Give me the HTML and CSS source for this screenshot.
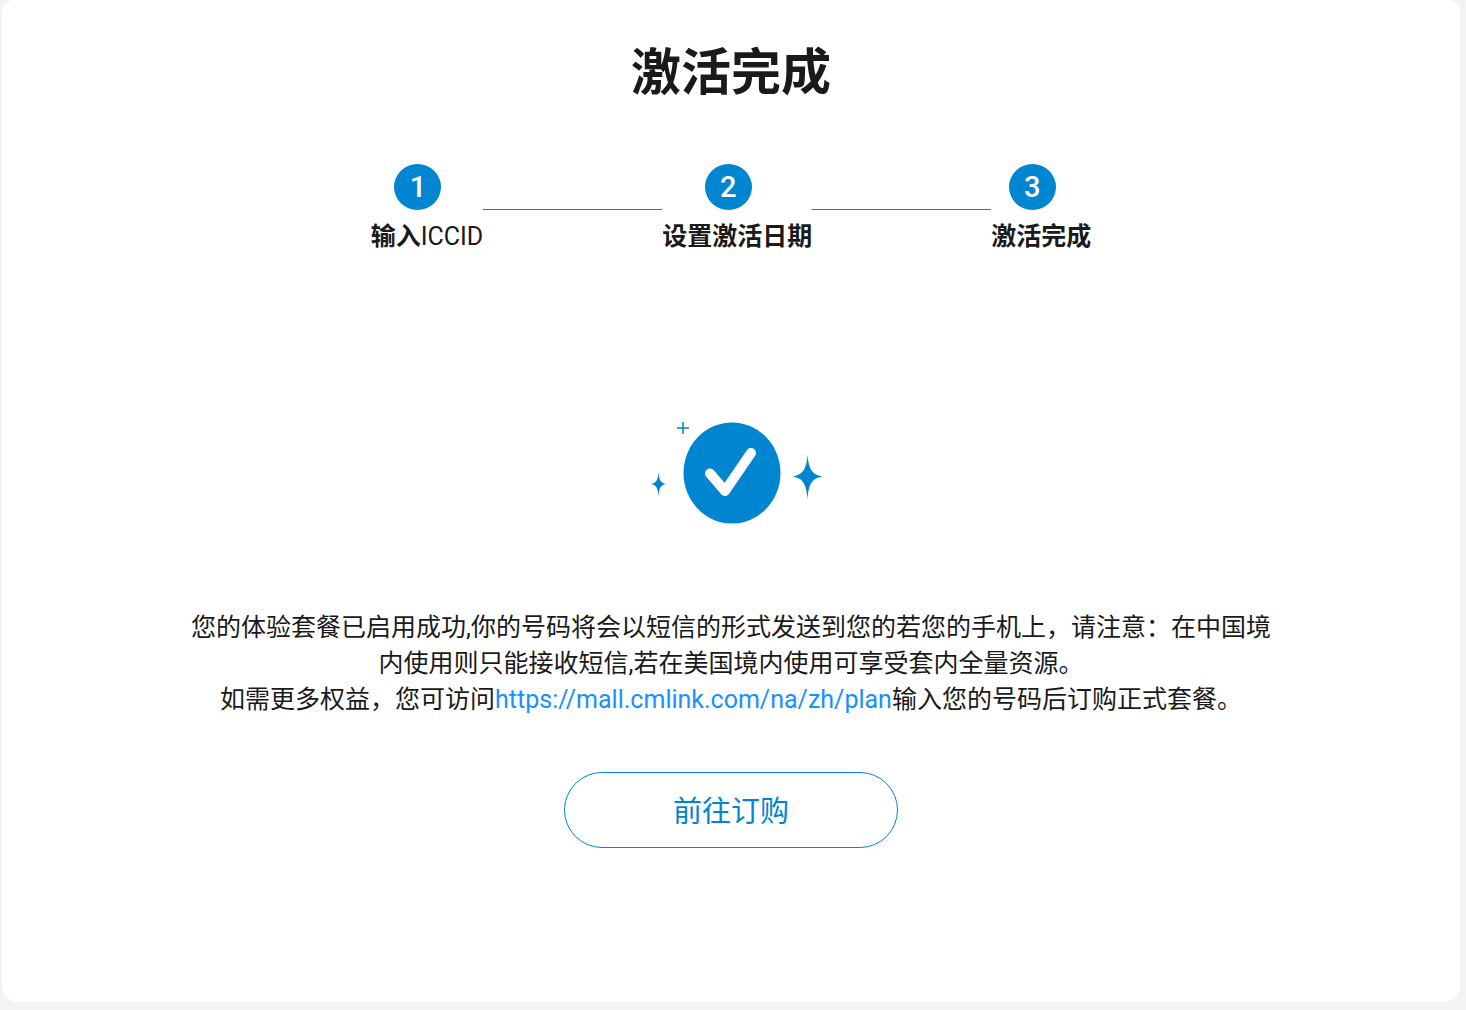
FILE: index.html
```html
<!DOCTYPE html>
<html lang="zh-CN">
<head>
<meta charset="utf-8">
<meta name="viewport" content="width=device-width, initial-scale=1">
<title>激活完成</title>
<link rel="stylesheet" href="styles.css">
</head>
<body>
<main class="card">
  <h1 class="title">激活完成</h1>
  <ol class="steps">
    <li class="step"><span class="step-number">1</span><span class="step-label">输入<span class="latin">ICCID</span></span></li>
    <li class="step-line" aria-hidden="true"></li>
    <li class="step"><span class="step-number">2</span><span class="step-label">设置激活日期</span></li>
    <li class="step-line" aria-hidden="true"></li>
    <li class="step"><span class="step-number">3</span><span class="step-label">激活完成</span></li>
  </ol>
  <svg class="success" viewBox="0 0 172 110" aria-hidden="true">
    <ellipse cx="87" cy="55" rx="48.500" ry="50.500" fill="currentColor"/>
    <path d="M65 55.500 80 73 106 35" fill="none" stroke="#fff" stroke-width="10" stroke-linecap="round" stroke-linejoin="round"/>
    <path d="M38 4v12M32 10h12" fill="none" stroke="currentColor" stroke-width="1.500"/>
    <path d="M13.500 54C14.300 62.500 15.500 64.500 21 66 15.500 67.500 14.300 69.500 13.500 78 12.700 69.500 11.500 67.500 6 66 11.500 64.500 12.700 62.500 13.500 54Z" fill="currentColor"/>
    <path d="M162.500 36.500C163.500 51 167 56.500 177 58.500 167 60.500 163.500 66 162.500 81.500 161.500 66 158 60.500 148 58.500 158 56.500 161.500 51 162.500 36.500Z" fill="currentColor"/>
  </svg>
  <p class="message">您的体验套餐已启用成功,你的号码将会以短信的形式发送到您的若您的手机上，请注意：在中国境内使用则只能接收短信,若在美国境内使用可享受套内全量资源。<br>如需更多权益，您可访问<a class="link" href="https://mall.cmlink.com/na/zh/plan">https://mall.cmlink.com/na/zh/plan</a>输入您的号码后订购正式套餐。</p>
  <button class="order" type="button">前往订购</button>
</main>
</body>
</html>
```
FILE: styles.css
```css
* {
  box-sizing: border-box;
}

body {
  margin: 0;
  padding: 0 6px 8px 2px;
  background: #f3f3f3;
  color: #1a1a1a;
  font-family: Roboto, "Noto Sans CJK SC", sans-serif;
}

.card {
  display: flex;
  flex-direction: column;
  align-items: center;
  min-height: calc(100vh - 8px);
  padding: 37px 24px 48px;
  background: #fff;
  border-radius: 12px 12px 16px 16px;
}

.title {
  margin: 0;
  font-size: 50px;
  line-height: 72px;
  font-weight: 700;
}

.steps {
  display: flex;
  margin: 55px 0 0;
  padding: 0;
  list-style: none;
}

.step {
  display: flex;
  flex-direction: column;
  align-items: center;
}

.step-number {
  width: 47px;
  height: 46px;
  margin-right: 18px;
  border-radius: 50%;
  background: #0085d0;
  color: #fff;
  font-size: 29px;
  line-height: 46px;
  font-weight: 500;
  text-align: center;
}

.step-label {
  margin-top: 9px;
  font-size: 25px;
  line-height: 36px;
  font-weight: 700;
}

.latin {
  font-weight: 400;
}

.step-line {
  width: 179px;
  height: 46px;
  border-bottom: 1px solid #0085d0;
}

.success {
  width: 172px;
  height: 110px;
  margin-top: 163px;
  overflow: visible;
  color: #0085d0;
}

.message {
  width: 100%;
  max-width: 1094px;
  margin: 82px 0 0;
  font-size: 25px;
  line-height: 36px;
  text-align: center;
}

.link {
  color: #1890ff;
  text-decoration: none;
}

.order {
  width: 334px;
  max-width: 100%;
  height: 76px;
  margin-top: 54px;
  padding: 0 0 2px;
  border: 1px solid #0085d0;
  border-radius: 38px;
  background: #fff;
  color: #0085d0;
  font-family: inherit;
  font-size: 29px;
}
```
